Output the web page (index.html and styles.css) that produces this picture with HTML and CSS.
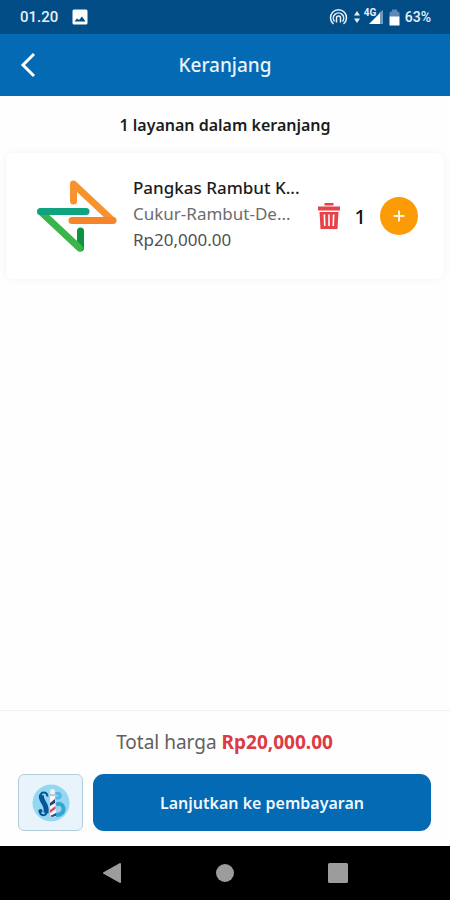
FILE: index.html
```html
<!DOCTYPE html>
<html lang="id">
<head>
    <meta charset="UTF-8">
    <meta name="viewport" content="width=device-width, initial-scale=1.0">
    <title>Keranjang</title>
    <link rel="stylesheet" href="styles.css">
</head>
<body>
    <div class="status-bar">
        <div class="status-left">
            <span>01.20</span>
            <svg width="16" height="16" viewBox="0 0 16 16">
                <rect x="0.5" y="0.5" width="15" height="15" rx="1.5" fill="#fff"/>
                <path d="M2.5 12.5l2.500-3 2 1.500 3-3.500 3.500 5z" fill="#034d87"/>
            </svg>
        </div>
        <div class="status-right">
            <svg width="19" height="18" viewBox="0 0 19 18" fill="none" stroke="#e6f0f7" stroke-width="1.5">
                <path d="M4.500 16A8 8 0 1 1 14.500 16"/>
                <path d="M5.500 13.500A5.200 5.200 0 1 1 13.500 13.500"/>
                <path d="M7.500 14.500V10a2 2 0 1 1 4 0V14.500"/>
            </svg>
            <svg width="8" height="14" viewBox="0 0 8 14" fill="#e6f0f7">
                <path d="M1 5.500L4 1l3 4.500zM1 8.500L4 13l3-4.500z"/>
            </svg>
            <div class="signal">
                <span class="signal-type">4G</span>
                <svg width="16" height="16" viewBox="0 0 16 16">
                    <path d="M11 4L15 1V15H11z" fill="#6f9abb"/>
                    <path d="M1 15L12 4V15z" fill="#fff"/>
                </svg>
            </div>
            <svg width="11" height="17" viewBox="0 0 11 17">
                <path d="M0.500 3.500L3 2V0.500H8V2L10.500 3.500V8H0.500z" fill="#5a8bb2"/>
                <path d="M0.500 7.500H10.500V16.500H0.500z" fill="#fff"/>
            </svg>
            <span class="battery">63%</span>
        </div>
    </div>

    <header class="header">
        <button class="back-button" type="button" aria-label="Kembali">
            <svg width="16" height="26" viewBox="0 0 16 26" fill="none" stroke="#fff" stroke-width="3">
                <path d="M14 2L3 13l11 11"/>
            </svg>
        </button>
        <h1>Keranjang</h1>
    </header>

    <main class="cart">
        <p class="cart-count">1 layanan dalam keranjang</p>

        <div class="cart-item">
            <svg class="item-logo" width="82" height="76" viewBox="0 0 82 76" fill="none" stroke-width="7" stroke-linecap="round" stroke-linejoin="round">
                <path d="M37.500 23V6L76 42" stroke="#f7922e"/>
                <path d="M77 42.500H36" stroke="#f5852b"/>
                <path d="M44.500 53V70" stroke="#0c9444"/>
                <path d="M5 34L43.500 70" stroke="#39b54a"/>
                <path d="M4.500 33.500H50" stroke="#0fa37f"/>
            </svg>
            <div class="item-info">
                <h2>Pangkas Rambut K...</h2>
                <p>Cukur-Rambut-De...</p>
                <p class="item-price">Rp20,000.00</p>
            </div>
            <div class="item-quantity">
                <button class="delete-button" type="button" aria-label="Hapus">
                    <svg width="22" height="26" viewBox="0 0 22 26" fill="#e8434b">
                        <path d="M6.500 0h9v2.500h-9zM0 3.500h22v4H0z"/>
                        <path fill-rule="evenodd" d="M1.500 9h19l-1 17H2.500zM5.500 11.500l.5 11.500h1.500L7.200 11.500zM10.200 11.500v11.500h1.600V11.500zM14.800 11.500l-.3 11.500h1.500l.5-11.500z"/>
                    </svg>
                </button>
                <span class="quantity">1</span>
                <button class="add-button" type="button" aria-label="Tambah">
                    <svg width="12" height="12" viewBox="0 0 12 12" stroke="#fff3d9" stroke-width="2">
                        <path d="M6 0.500v11M0.500 6h11"/>
                    </svg>
                </button>
            </div>
        </div>
    </main>

    <footer class="checkout">
        <p class="total">Total harga <strong>Rp20,000.00</strong></p>
        <div class="checkout-actions">
            <button class="shop-button" type="button" aria-label="Toko">
                <svg width="38" height="38" viewBox="0 0 38 38">
                    <circle cx="19" cy="19" r="18.500" fill="#94d7f2"/>
                    <!-- B behind the pole -->
                    <path d="M23 10C27 8 30 11 27 14H23" fill="none" stroke="#55b8df" stroke-width="3"/>
                    <path d="M24 21C29 17 34 24 30 29C28 31 26 31 24 31" fill="none" stroke="#35a5d4" stroke-width="4"/>
                    <!-- S -->
                    <path d="M15.500 12.500C15 7 8.500 7 8.500 12.500C8.500 19 15.500 19.500 15 26.500C14.500 33 8 32.500 7.500 26.500" fill="none" stroke="#07549b" stroke-width="2"/>
                    <path d="M9.500 11C8 18 16 19 14 29" fill="none" stroke="#07549b" stroke-width="5"/>
                    <circle cx="8.500" cy="27" r="2" fill="#07549b"/>
                    <!-- barber pole -->
                    <path d="M18 9h5l1 24h-6z" fill="#f8f6f8"/>
                    <path d="M18 19l5-4v4l-5 3z" fill="#243e80"/>
                    <path d="M18 26l5.500-4v3l-5.500 4z" fill="#dc4a54"/>
                    <path d="M18 32l6-3v3l-4 1z" fill="#34508c"/>
                    <circle cx="20.500" cy="7.500" r="2.500" fill="#f4eeec"/>
                    <path d="M17 10h7v2h-7z" fill="#b9c9d6"/>
                </svg>
            </button>
            <button class="pay-button" type="button">Lanjutkan ke pembayaran</button>
        </div>
    </footer>

    <nav class="nav-bar">
        <button type="button" aria-label="Back">
            <svg width="20" height="22" viewBox="0 0 20 22" fill="#9c9c9c">
                <path d="M18 2L2 11L18 20z" stroke="#9c9c9c" stroke-width="2" stroke-linejoin="round"/>
            </svg>
        </button>
        <button type="button" aria-label="Home">
            <svg width="20" height="20" viewBox="0 0 20 20" fill="#9c9c9c">
                <circle cx="10" cy="10" r="9"/>
            </svg>
        </button>
        <button type="button" aria-label="Recent">
            <svg width="20" height="20" viewBox="0 0 20 20" fill="#9c9c9c">
                <rect width="20" height="20" rx="1.500"/>
            </svg>
        </button>
    </nav>
</body>
</html>
```
FILE: styles.css
```css
* {
    box-sizing: border-box;
}

body {
    margin: 0;
    min-height: 100vh;
    display: flex;
    flex-direction: column;
    font-family: 'Noto Sans', 'Open Sans', sans-serif;
    background: #fefefe;
    color: #1c1c1c;
}

h1, h2, p {
    margin: 0;
}

button {
    display: flex;
    align-items: center;
    justify-content: center;
    padding: 0;
    border: none;
    background: none;
    font-family: inherit;
    cursor: pointer;
}

svg {
    display: block;
    flex-shrink: 0;
}

.status-bar {
    display: flex;
    justify-content: space-between;
    align-items: center;
    height: 34px;
    padding: 0 19px 0 20px;
    background: #034d87;
    color: #e6f0f7;
    font-family: Roboto, sans-serif;
    font-size: 15px;
    font-weight: 500;
}

.status-left {
    display: flex;
    align-items: center;
    gap: 14px;
}

.status-right {
    display: flex;
    align-items: center;
    gap: 5px;
}

.signal {
    display: flex;
    position: relative;
    padding-left: 2px;
}

.signal-type {
    position: absolute;
    top: -1px;
    left: -2px;
    font-size: 10px;
    line-height: 10px;
    font-weight: bold;
}

.battery {
    font-size: 14px;
}

.header {
    display: grid;
    grid-template-columns: 56px 1fr 56px;
    align-items: center;
    height: 62px;
    background: #046ab4;
    color: #eaf4fb;
}

.back-button {
    height: 62px;
}

.header h1 {
    text-align: center;
    font-size: 19px;
    font-weight: 500;
}

.cart {
    flex: 1;
    padding: 16px 6px;
}

.cart-count {
    text-align: center;
    font-size: 16px;
    line-height: 26px;
    font-weight: 600;
}

.cart-item {
    display: flex;
    align-items: center;
    margin-top: 15px;
    padding: 22px 26px 22px 30px;
    min-height: 126px;
    border-radius: 8px;
    background: #fff;
    box-shadow: 0 0 8px rgba(0, 0, 0, 0.05);
}

.item-info {
    flex: 1;
    min-width: 0;
    padding: 0 0 4px 15px;
    font-size: 17px;
    line-height: 26px;
    white-space: nowrap;
    color: #6c6c6c;
}

.item-info h2 {
    font-size: 17px;
    font-weight: 500;
    color: #1c1c1c;
}

.item-info .item-price {
    color: #505050;
}

.item-quantity {
    display: flex;
    align-items: center;
    gap: 14px;
}

.delete-button {
    width: 24px;
}

.quantity {
    font-size: 20px;
    font-weight: 500;
    color: #111;
}

.add-button {
    width: 38px;
    height: 38px;
    border-radius: 50%;
    background: #fb9b05;
}

.checkout {
    padding: 18px 19px 15px 18px;
    border-top: 1px solid #f0f0f0;
}

.total {
    text-align: center;
    font-size: 19px;
    line-height: 26px;
    color: #606060;
}

.total strong {
    font-weight: 700;
    color: #dc3b45;
}

.checkout-actions {
    display: flex;
    gap: 10px;
    margin-top: 19px;
}

.shop-button {
    width: 65px;
    height: 57px;
    border: 1px solid #b3cdd8;
    border-radius: 6px;
    background: #e9f3fb;
}

.pay-button {
    flex: 1;
    height: 57px;
    border-radius: 11px;
    background: #046ab4;
    color: #f0f7fc;
    font-size: 16px;
    font-weight: 600;
}

.nav-bar {
    display: flex;
    justify-content: center;
    align-items: center;
    gap: 89px;
    height: 54px;
    background: #000;
}

.nav-bar button {
    width: 24px;
    height: 24px;
}
```
